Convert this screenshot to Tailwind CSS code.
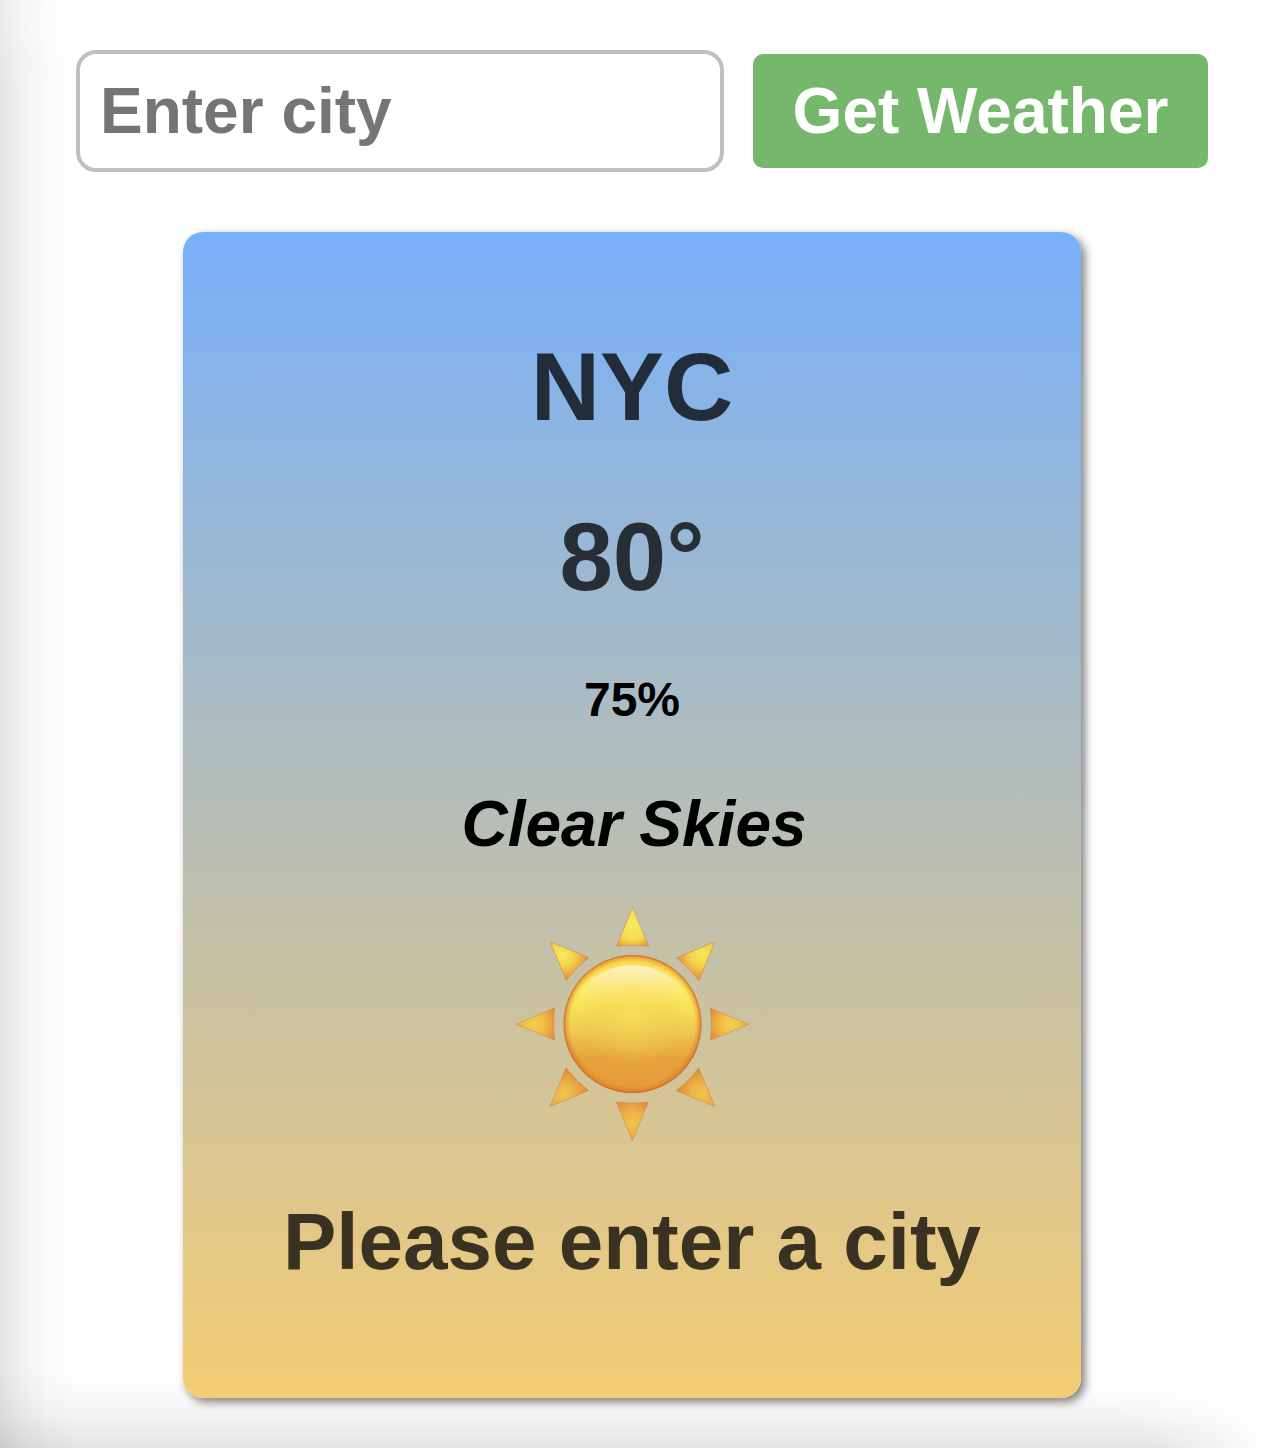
<!DOCTYPE html>
<html lang="en">
<head>
<meta charset="utf-8">
<title>Weather</title>
<script src="https://cdn.jsdelivr.net/npm/@tailwindcss/browser@4"></script>
</head>
<body class="relative h-[1448px] overflow-hidden bg-white font-['Liberation_Sans',Arial,sans-serif] font-bold">
  <!-- soft edge shading -->
  <div class="pointer-events-none absolute inset-y-0 left-0 w-[72px] bg-[linear-gradient(to_right,rgba(0,0,0,0.11),rgba(0,0,0,0.055)_30%,rgba(0,0,0,0.02)_65%,rgba(0,0,0,0.005))] [mask-image:linear-gradient(to_bottom,rgba(0,0,0,0.65),black_100px)]"></div>
  <div class="pointer-events-none absolute inset-x-0 bottom-0 h-20 bg-[linear-gradient(to_top,rgba(0,0,0,0.11),rgba(0,0,0,0.045)_40%,rgba(0,0,0,0.015)_70%,transparent)] [mask-image:radial-gradient(190px_120px_at_1080px_100%,black_35%,transparent),linear-gradient(to_right,black_1080px,transparent_1080px)]"></div>

  <form class="relative flex items-center gap-[29px] pt-[50px] pl-[76px]">
    <input type="text" placeholder="Enter city" class="h-[122px] w-[648px] rounded-[20px] border-4 border-[#c0c0c0] bg-white px-5 text-[64px] leading-[74px] font-bold placeholder:text-[#757575]">
    <button type="button" class="h-[114px] w-[455px] rounded-[10px] bg-[#76b86b] text-[64px] leading-[74px] font-bold text-white">Get Weather</button>
  </form>

  <main class="relative mt-[60px] ml-[183px] flex h-[1166px] w-[898px] flex-col items-center rounded-[20px] bg-linear-to-b/srgb from-[#78b0f9] to-[#f4cc74] pt-[100px] whitespace-nowrap shadow-[4px_4px_10px_rgba(0,0,0,0.5)]">
    <h1 class="text-[96px] leading-[110px] text-black/75">NYC</h1>
    <p class="mt-[60px] text-[96px] leading-[110px] text-black/75">80°</p>
    <p class="mt-[60px] text-[48px] leading-[55px] text-black">75%</p>
    <p class="mt-[60px] pl-1 text-[64px] leading-[74px] text-black italic">Clear Skies</p>
    <svg class="mt-[34px] h-[260px] w-[265px] shrink-0" viewBox="0 0 795 780">
      <defs>
        <linearGradient id="body" x1="0" y1="0" x2="0" y2="1">
          <stop offset="0" stop-color="#f5d94c"/><stop offset=".25" stop-color="#fbeb60"/><stop offset=".4" stop-color="#f8df58"/><stop offset=".55" stop-color="#efc94e"/><stop offset=".75" stop-color="#e5a33e"/><stop offset="1" stop-color="#e79a38"/>
        </linearGradient>
        <radialGradient id="glow" cx=".5" cy=".43" r=".38">
          <stop offset="0" stop-color="#f7df58" stop-opacity=".7"/><stop offset=".5" stop-color="#efd352" stop-opacity=".5"/><stop offset="1" stop-color="#ecc34c" stop-opacity="0"/>
        </radialGradient>
        <radialGradient id="edge">
          <stop offset=".9" stop-color="#d87528" stop-opacity="0"/><stop offset=".965" stop-color="#d87528" stop-opacity=".45"/><stop offset="1" stop-color="#c8622c"/>
        </radialGradient>
        <linearGradient id="shine" x1="0" y1="0" x2="0" y2="1">
          <stop offset="0" stop-color="#fdf0c0"/><stop offset=".3" stop-color="#fceea8" stop-opacity=".85"/><stop offset="1" stop-color="#fbe860" stop-opacity="0"/>
        </linearGradient>
        <radialGradient id="top" gradientUnits="userSpaceOnUse" cx="397" cy="88" r="76">
          <stop offset="0" stop-color="#faea60"/><stop offset=".6" stop-color="#f6dc54"/><stop offset="1" stop-color="#e59b3a"/>
        </radialGradient>
        <radialGradient id="upper" gradientUnits="userSpaceOnUse" cx="397" cy="92" r="74">
          <stop offset="0" stop-color="#fae95c"/><stop offset=".5" stop-color="#f4d04d"/><stop offset="1" stop-color="#e3903a"/>
        </radialGradient>
        <radialGradient id="side" gradientUnits="userSpaceOnUse" cx="397" cy="92" r="72">
          <stop offset="0" stop-color="#f4cf52"/><stop offset=".45" stop-color="#f1bc47"/><stop offset="1" stop-color="#e18e38"/>
        </radialGradient>
        <radialGradient id="lower" gradientUnits="userSpaceOnUse" cx="397" cy="92" r="72">
          <stop offset="0" stop-color="#efc450"/><stop offset=".5" stop-color="#edb045"/><stop offset="1" stop-color="#e08f38"/>
        </radialGradient>
        <path id="ray" d="M397.500 38L446 154Q397.500 147 350 154Z" stroke="#c57b3e" stroke-opacity=".65" stroke-width="2"/>
      </defs>
      <use href="#ray" fill="url(#top)"/>
      <use href="#ray" fill="url(#upper)" transform="rotate(45 397.500 387.500)"/>
      <use href="#ray" fill="url(#side)" transform="rotate(90 397.500 387.500)"/>
      <use href="#ray" fill="url(#lower)" transform="rotate(135 397.500 387.500)"/>
      <use href="#ray" fill="url(#lower)" transform="rotate(180 397.500 387.500)"/>
      <use href="#ray" fill="url(#lower)" transform="rotate(225 397.500 387.500)"/>
      <use href="#ray" fill="url(#side)" transform="rotate(270 397.500 387.500)"/>
      <use href="#ray" fill="url(#upper)" transform="rotate(315 397.500 387.500)"/>
      <circle cx="397.500" cy="387" r="207" fill="url(#body)"/>
      <circle cx="397.500" cy="387" r="207" fill="url(#glow)"/>
      <path d="M232 325C255 250 320 211 397.500 211S540 250 563 325C520 350 275 350 232 325Z" fill="url(#shine)"/>
      <circle cx="397.500" cy="387" r="207" fill="url(#edge)"/>
    </svg>
    <p class="mt-[41px] text-[80px] leading-[92px] text-black/75">Please enter a city</p>
  </main>
</body>
</html>
